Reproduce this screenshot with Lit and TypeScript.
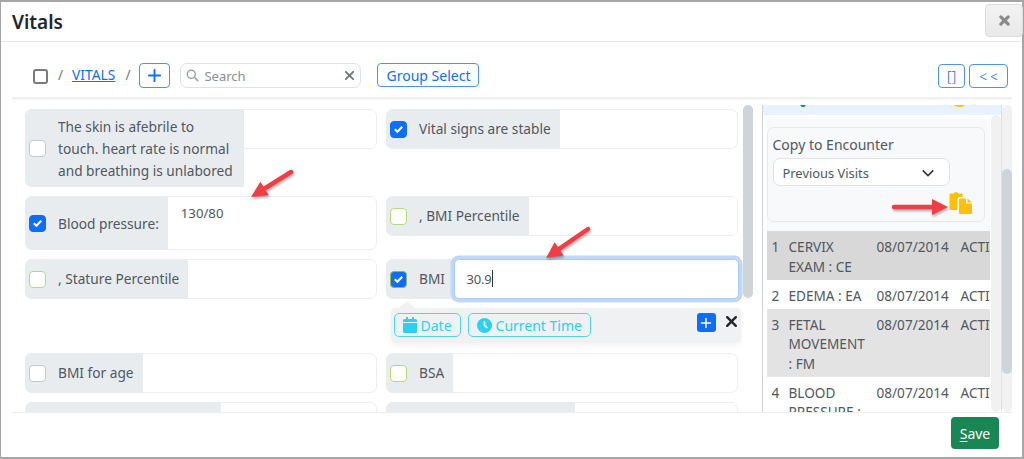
import { LitElement, html, css, svg } from "lit";
import { customElement } from "lit/decorators.js";

const arrow = (x1: number, y1: number, x2: number, y2: number) => {
  const a = Math.atan2(y2 - y1, x2 - x1);
  const L = 16, W = 8;
  const bx = x2 - L * Math.cos(a), by = y2 - L * Math.sin(a);
  const nx = -Math.sin(a), ny = Math.cos(a);
  return svg`
    <line x1=${x1} y1=${y1} x2=${bx} y2=${by} stroke="#ee3f47" stroke-width="4.5" stroke-linecap="round"></line>
    <polygon fill="#ee3f47" points="${x2},${y2} ${bx + nx * W},${by + ny * W} ${bx - nx * W},${by - ny * W}"></polygon>`;
};

const tick = html`<svg viewBox="0 0 16 16" width="16" height="16"><path d="M4 8.2l2.8 2.8L12 5.6" fill="none" stroke="#fff" stroke-width="2.2"/></svg>`;

@customElement("app-root")
export class AppRoot extends LitElement {
  static styles = css`
    :host { display: block; width: 1024px; height: 459px; font-family: "Noto Sans", "Open Sans", sans-serif; font-size: 13.7px; color: #50575e; position: relative; overflow: hidden; background: #fff; }
    * { box-sizing: border-box; }
    .frame { height: 459px; border: 2px solid #a6a6a6; border-left-width: 1.5px; display: flex; flex-direction: column; background: #fff; }
    .header { height: 40px; flex: none; border-bottom: 1px solid #e6e6e6; display: flex; align-items: flex-start; justify-content: space-between; padding-left: 11px; }
    .title { font-size: 19px; font-weight: 600; color: #212529; line-height: 40px; }
    .close { width: 38px; height: 33px; margin-top: 2px; border: 1px solid #dcdcdc; border-radius: 4px; background: linear-gradient(#f3f3f3, #e9e9e9); display: flex; align-items: center; justify-content: center; margin-right: -1px; }
    .toolbar { height: 55px; flex: none; display: flex; align-items: flex-start; padding: 21px 0 0 32px; color: #6c757d; }
    .box { width: 15px; height: 15px; border: 2px solid #7a7a7a; border-radius: 3px; margin: 6px 10px 0 0; flex: none; }
    .sl { line-height: 24px; margin-right: 9px; color: #777; }
    .link { line-height: 24px; color: #0d6efd; text-decoration: underline; margin-right: 10px; font-size: 13.8px; }
    .btn { border: 1px solid #4b92fd; border-radius: 4px; color: #0d6efd; background: #fff; display: flex; align-items: center; justify-content: center; flex: none; }
    .plus { width: 31px; height: 25px; margin-right: 10px; }
    .search { width: 181px; height: 25px; border: 1px solid #dee2e6; border-radius: 7px; display: flex; align-items: center; padding: 0 5px 0 5px; color: #8a9096; margin-right: 16px; flex: none; }
    .search span { flex: 1; margin-left: 5px; font-size: 13px; }
    .group { width: 102px; height: 24px; font-size: 14px; }
    .spacer { flex: 1; }
    .br { width: 27px; height: 24px; margin: 1px 4px 0 0; font-size: 15px; font-weight: 300; }
    .ll { width: 39px; height: 24px; margin: 1px 14px 0 0; font-size: 13.6px; letter-spacing: 3px; padding-left: 3px; font-weight: 300; }
    .main { flex: none; height: 316px; margin: 0 10px 0 10.5px; display: flex; overflow: hidden; box-shadow: inset 0 2px 2px -1px #e8e8e8; border-top: 1px solid #f0f0f0; border-bottom: 1px solid #eee; }
    .left { width: 731px; flex: none; overflow: hidden; padding: 11px 0 0 13px; }
    .grid { display: grid; grid-template-columns: 352px 352px; column-gap: 9px; row-gap: 9px; grid-template-rows: 78px 54px 85px 40px 40px; }
    .cell { display: flex; flex-direction: column; min-width: 0; }
    .card { height: 40px; flex: none; border: 1px solid #eee; border-radius: 7px; background: #fff; display: flex; align-items: flex-start; position: relative; }
    .card.tall { height: 54px; }
    .lab { margin: -1px 0 0 -1px; background: #e9ecef; border-radius: 7px 0 0 7px; display: flex; align-items: center; min-height: 40px; padding: 9px 9px 9px 4px; line-height: 22px; flex: none; }
    .lab.wrap { width: 219px; height: 78px; padding-right: 7px; }
    .lab.h54 { height: 54px; }
    .lab.bmi { width: 65px; height: 40px; }
    .nudge { padding-top: 2px; }
    .chk { width: 17px; height: 17px; border: 1px solid #c5c8cc; border-radius: 4px; background: #fff; flex: none; margin-right: 12.5px; display: flex; align-items: center; justify-content: center; }
    .chk.lime { border-color: #b7d971; }
    .chk.on { background: #0d6efd; border-color: #0d6efd; }
    .chk.on.lime { border-color: #8fb84e; }
    .val { padding: 6px 0 0 13px; line-height: 20px; font-size: 13.2px; }
    .focus { flex: 1; align-self: stretch; margin: -1px -2px -1px 3px; border: 1px solid #a9cbfd; border-radius: 5px; box-shadow: 0 0 0 3.5px #bfd7fb; padding: 9px 0 0 12px; background: #fff; position: relative; z-index: 1; line-height: 20px; font-size: 13px; letter-spacing: -0.2px; }
    .caret { display: inline-block; width: 1px; height: 17px; background: #333; vertical-align: -3px; }
    .pop { margin: 9px -3px 0 5px; height: 35px; background: #f0f1f3; border-radius: 5px; position: relative; display: flex; align-items: flex-start; padding: 5px 0 0 3px; gap: 7px; box-shadow: 0 3px 6px rgba(0,0,0,.05); }
    .pop::before { content: ""; position: absolute; left: 8px; top: -7px; border: 8px solid transparent; border-top: 0; border-bottom: 7px solid #f0f1f3; }
    .info { height: 24px; border: 1px solid #4dd6f3; border-radius: 5px; color: #2cd0f2; display: flex; align-items: center; gap: 4px; font-size: 14px; padding: 0 8px; }
    .pplus { position: absolute; left: 306px; top: 5px; width: 19px; height: 19px; border-radius: 3px; background: #0d6efd; display: flex; align-items: center; justify-content: center; }
    .px { position: absolute; left: 334px; top: 7px; display: flex; }
    .sb { width: 10px; flex: none; margin-top: 7px; border-radius: 5px; }
    .thumb { background: #ced4da; border-radius: 5px; width: 100%; }
    .thumb.a { height: 193px; }
    .gap9 { width: 9px; flex: none; }
    .rp { width: 240px; flex: none; margin-top: 7px; border-left: 1px solid #cfd3d8; border-right: 1px solid #e0e0e0; display: flex; flex-direction: column; position: relative; overflow: hidden; }
    .strip { height: 10px; flex: none; background: #e7f1ff; position: relative; }
    .dot { position: absolute; top: -6px; height: 8px; border-radius: 50%; }
    .dot.b { left: 37px; width: 6px; background: #0d6efd; }
    .dot.y { left: 190px; width: 13px; background: #ffc107; }
    .rb { display: flex; flex: 1; min-height: 0; padding: 4px 0 0 4px; }
    .pane { width: 223px; flex: none; background: #f8f9fa; padding-top: 8px; overflow: hidden; }
    .sbi { width: 10px; margin-left: 1px; flex: none; background: #f1f1f1; border-radius: 5px; margin-top: -4px; }
    .sbo { width: 10px; flex: none; margin-top: 7px; background: #f1f1f1; border-radius: 5px; padding-top: 64px; }
    .thumb.o { height: 205px; }
    .enc { width: 218px; height: 95px; border: 1px solid #e6e8eb; border-radius: 7px; padding: 6px 0 0 5px; position: relative; }
    .enc-t { font-size: 14px; line-height: 21px; }
    .sel { width: 177px; height: 28px; margin-top: 3px; border: 1px solid #dee2e6; border-radius: 7px; background: #fff; display: flex; align-items: center; justify-content: space-between; padding: 1px 14px 0 9px; font-size: 12.9px; }
    .cp { position: absolute; left: 181px; top: 63px; }
    table { border-collapse: collapse; margin-top: 9px; width: 223px; table-layout: fixed; background: #fff; }
    td { padding: 6px 0 3.5px 5px; vertical-align: top; line-height: 19.5px; font-size: 13.6px; overflow: hidden; white-space: nowrap; }
    td.n { white-space: normal; padding-left: 0; padding-right: 2px; }
    tr.g1 { background: #d8d8d8; }
    tr.g2 { background: #e3e3e3; }
    .c1 { width: 22px; }
    .c2 { width: 83px; }
    .c3 { width: 84px; }
    .c4 { width: 34px; }
    .footer { flex: 1; display: flex; justify-content: flex-end; align-items: flex-start; padding: 4px 23px 0 0; }
    .save { width: 48px; height: 32px; background: #198754; color: #fff; border-radius: 4px; font-size: 14px; display: flex; align-items: center; justify-content: center; }
    .save u { text-underline-offset: 2px; }
    .arrows { position: absolute; inset: 0; pointer-events: none; z-index: 5; filter: drop-shadow(1px 2px 1px rgba(0,0,0,.3)); }
    .w196 { width: 196px; }
    .w189 { width: 189px; }
  `;

  private row(num: string, name: string, cls = "") {
    return html`<tr class=${cls}><td>${num}</td><td class="n">${name}</td><td>08/07/2014</td><td>ACTIVE</td></tr>`;
  }

  private check(on = false, lime = false) {
    return html`<span class="chk ${on ? "on" : ""} ${lime ? "lime" : ""}">${on ? tick : ""}</span>`;
  }

  private simple(text: string, on = false, lime = false) {
    return html`<div class="cell"><div class="card"><div class="lab">${this.check(on, lime)}<span>${text}</span></div></div></div>`;
  }

  render() {
    const plus = (c: string, s: number) => html`<svg viewBox="0 0 16 16" width=${s} height=${s}><path d="M8 2v12M2 8h12" stroke=${c} stroke-width="2" stroke-linecap="round"/></svg>`;
    const x = (c: string, s: number, w: number) => html`<svg viewBox="0 0 12 12" width=${s} height=${s}><path d="M2 2l8 8M10 2l-8 8" stroke=${c} stroke-width=${w} stroke-linecap="round"/></svg>`;
    return html`
      <div class="frame">
        <div class="header">
          <div class="title">Vitals</div>
          <div class="close">${x("#8a8a8a", 11, 3.4)}</div>
        </div>
        <div class="toolbar">
          <span class="box"></span><span class="sl">/</span><span class="link">VITALS</span><span class="sl">/</span>
          <span class="btn plus">${plus("#0d6efd", 15)}</span>
          <div class="search">
            <svg viewBox="0 0 16 16" width="13" height="13"><circle cx="6.5" cy="6.500" r="5" fill="none" stroke="#9aa0a6" stroke-width="1.7"/><path d="M10.500 10.500L15 15" stroke="#9aa0a6" stroke-width="2"/></svg>
            <span>Search</span>
            ${x("#6c757d", 11, 2)}
          </div>
          <span class="btn group">Group Select</span>
          <span class="spacer"></span>
          <span class="btn br">[]</span>
          <span class="btn ll">&lt;&lt;</span>
        </div>
        <div class="main">
          <div class="left">
            <div class="grid">
              <div class="cell"><div class="card"><div class="lab wrap">${this.check()}<span class="nudge">The skin is afebrile to touch. heart rate is normal and breathing is unlabored</span></div></div></div>
              ${this.simple("Vital signs are stable", true)}
              <div class="cell"><div class="card tall"><div class="lab h54">${this.check(true)}<span class="nudge">Blood pressure:</span></div><div class="val">130/80</div></div></div>
              ${this.simple(", BMI Percentile", false, true)}
              ${this.simple(", Stature Percentile", false, true)}
              <div class="cell">
                <div class="card"><div class="lab bmi">${this.check(true, true)}<span>BMI</span></div><div class="focus">30.9<span class="caret"></span></div></div>
                <div class="pop">
                  <span class="info"><svg viewBox="0 0 14 16" width="14" height="16"><path fill="#2cd0f2" d="M0 6h14v8.500a1.500 1.500 0 0 1-1.500 1.500h-11A1.500 1.500 0 0 1 0 14.500zM1.500 2H3V0h2v2h4V0h2v2h1.500A1.500 1.500 0 0 1 14 3.500V5H0V3.500A1.500 1.500 0 0 1 1.500 2z"/></svg>Date</span>
                  <span class="info"><svg viewBox="0 0 16 16" width="15" height="15"><circle cx="8" cy="8" r="8" fill="#2cd0f2"/><path d="M8 3.500V8l3 2.500" fill="none" stroke="#fff" stroke-width="1.700"/></svg>Current Time</span>
                  <span class="pplus">${plus("#fff", 12)}</span>
                  <span class="px">${x("#212529", 13, 2.2)}</span>
                </div>
              </div>
              ${this.simple("BMI for age")}
              ${this.simple("BSA", false, true)}
              <div class="cell"><div class="card"><div class="lab w196">${this.check()}</div></div></div>
              <div class="cell"><div class="card"><div class="lab w189">${this.check(false, true)}</div></div></div>
            </div>
          </div>
          <div class="sb"><div class="thumb a"></div></div>
          <div class="gap9"></div>
          <div class="rp">
            <div class="strip"><span class="dot b"></span><span class="dot y"></span></div>
            <div class="rb">
              <div class="pane">
                <div class="enc">
                  <div class="enc-t">Copy to Encounter</div>
                  <div class="sel"><span>Previous Visits</span><svg viewBox="0 0 16 16" width="14" height="14"><path d="M2 5l6 6 6-6" fill="none" stroke="#343a40" stroke-width="2"/></svg></div>
                  <svg class="cp" viewBox="0 0 24 23" width="24" height="23">
                    <path fill="#ffc107" d="M1.500 2.500h3.200a2.500 2.500 0 0 1 4.600 0h3.200a1 1 0 0 1 1 1V6h-2.500a2.500 2.500 0 0 0-2.500 2.500V19H1.500a1 1 0 0 1-1-1V3.500a1 1 0 0 1 1-1z"/>
                    <path fill="#ffc107" d="M11 7.500h6v5h6V22a1 1 0 0 1-1 1H11a1 1 0 0 1-1-1V8.500a1 1 0 0 1 1-1zM18.500 7.500L23 11.500h-4.500z"/>
                  </svg>
                </div>
                <table>
                  <colgroup><col class="c1"/><col class="c2"/><col class="c3"/><col class="c4"/></colgroup>
                  ${this.row("1", "CERVIX EXAM : CE", "g1")}
                  ${this.row("2", "EDEMA : EA")}
                  ${this.row("3", "FETAL MOVEMENT : FM", "g2")}
                  ${this.row("4", "BLOOD PRESSURE : BP")}
                </table>
              </div>
              <div class="sbi"></div>
            </div>
          </div>
          <div class="sbo"><div class="thumb o"></div></div>
        </div>
        <div class="footer"><div class="save"><span><u>S</u>ave</span></div></div>
      </div>
      <svg class="arrows" width="1024" height="459" viewBox="0 0 1024 459">
        ${arrow(291, 172, 251, 197)}
        ${arrow(588, 229, 546, 258)}
        ${arrow(894, 207, 948, 207)}
      </svg>
    `;
  }
}
